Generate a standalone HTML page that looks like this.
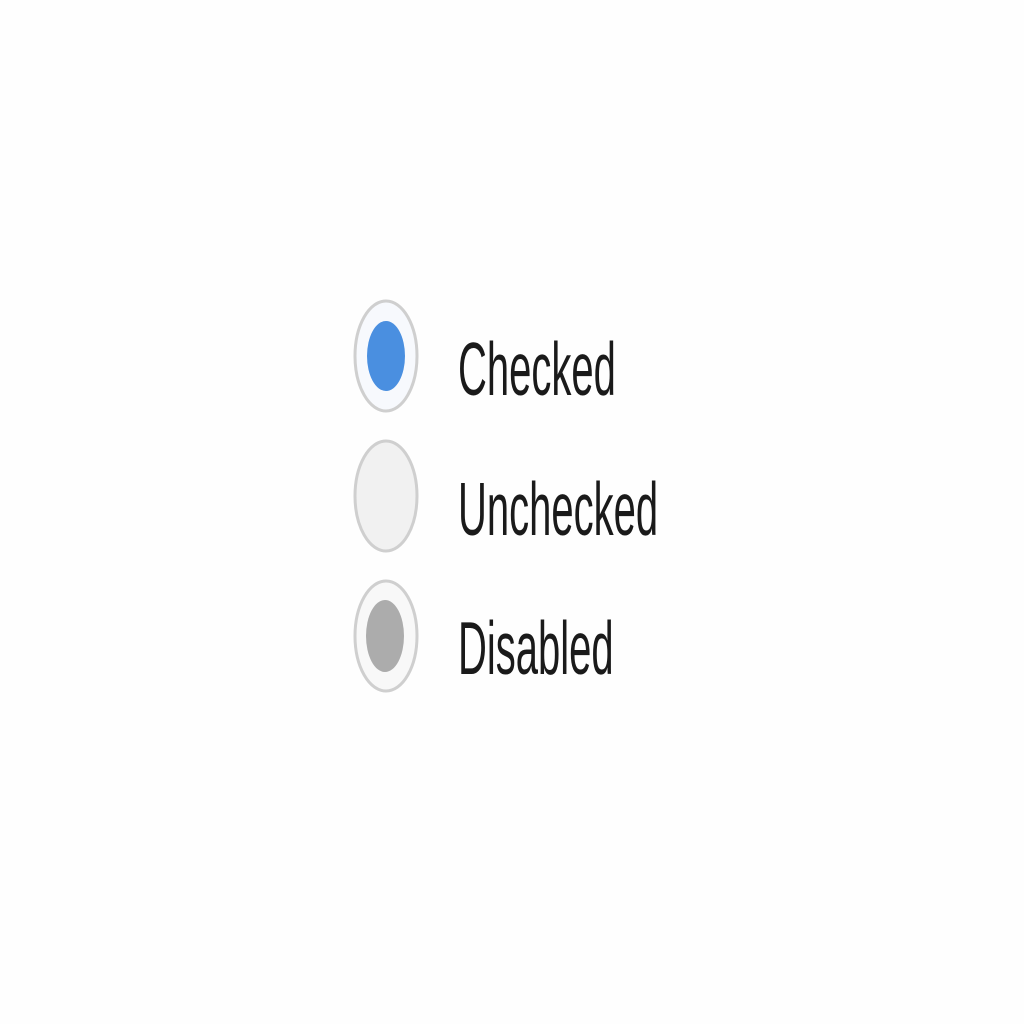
<!DOCTYPE html>
<html><head><style>html,body{margin:0;padding:0;background:#fff;width:1024px;height:1024px;overflow:hidden}</style></head>
<body>
<svg width="1024" height="1024" xmlns="http://www.w3.org/2000/svg" style="display:block">
<rect width="1024" height="1024" fill="#fefefe"/>
<ellipse cx="386" cy="356" rx="31" ry="55" fill="#f7f9fd" stroke="#cfcfcf" stroke-width="3"/>
<ellipse cx="386" cy="356" rx="19" ry="35" fill="#4a8fe0"/>
<ellipse cx="386" cy="496" rx="31" ry="55" fill="#f1f1f1" stroke="#cfcfcf" stroke-width="3"/>
<ellipse cx="386" cy="636" rx="31" ry="55" fill="#f8f8f8" stroke="#cfcfcf" stroke-width="3"/>
<ellipse cx="385" cy="636" rx="19" ry="36" fill="#acacac"/>
<g font-family="Liberation Sans, sans-serif" font-size="40" fill="#1a1a1a">
<text transform="translate(458,395) scale(1,1.88)">Checked</text>
<text transform="translate(458,535) scale(1,1.88)">Unchecked</text>
<text transform="translate(458,674) scale(1,1.88)">Disabled</text>
</g>
</svg>
</body></html>
